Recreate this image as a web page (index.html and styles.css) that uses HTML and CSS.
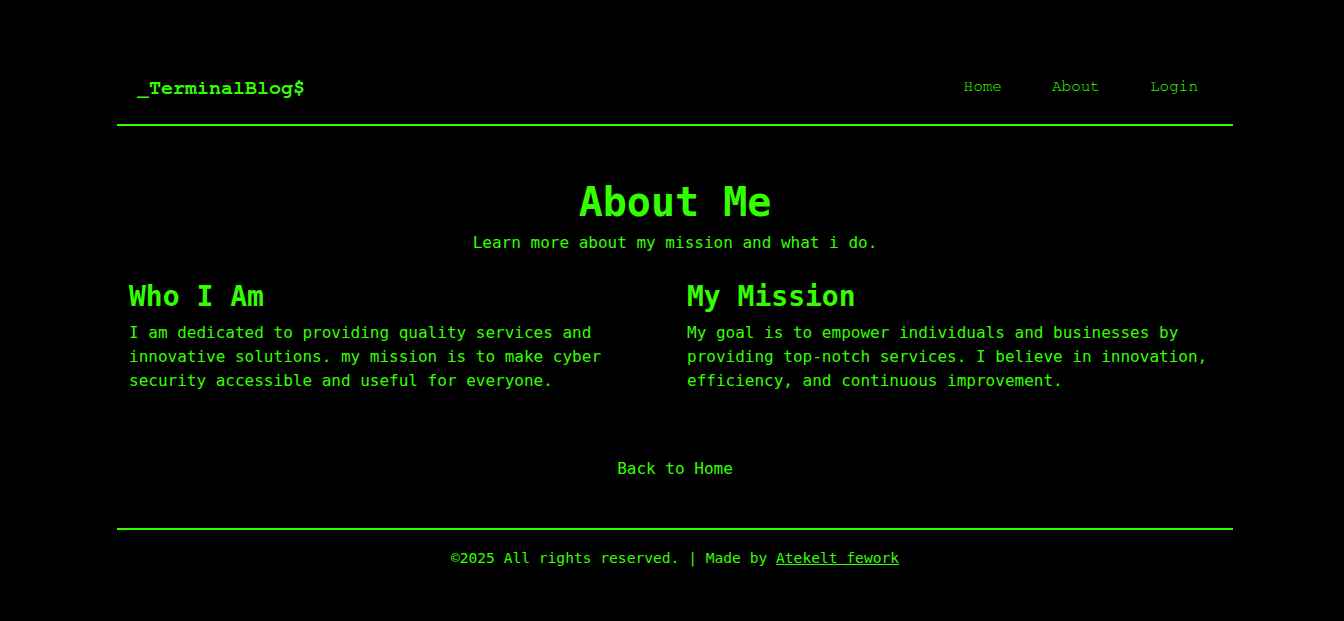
FILE: index.html
```html
<!DOCTYPE html>
<html lang="en">
<head>
<meta charset="utf-8">
<title>About - TerminalBlog</title>
<link rel="stylesheet" href="styles.css">
</head>
<body>
<div class="page">
  <header class="site-header">
    <a class="logo" href="#">_TerminalBlog$</a>
    <nav class="nav">
      <a href="#">Home</a>
      <a href="#">About</a>
      <a href="#">Login</a>
    </nav>
  </header>
  <main class="main">
    <section class="intro">
      <h1>About Me</h1>
      <p>Learn more about my mission and what i do.</p>
    </section>
    <section class="columns">
      <div class="col">
        <h2>Who I Am</h2>
        <p>I am dedicated to providing quality services and innovative solutions. my mission is to make cyber security accessible and useful for everyone.</p>
      </div>
      <div class="col">
        <h2>My Mission</h2>
        <p>My goal is to empower individuals and businesses by providing top-notch services. I believe in innovation, efficiency, and continuous improvement.</p>
      </div>
    </section>
    <div class="back"><a href="#">Back to Home</a></div>
  </main>
  <footer class="site-footer">
    <p>&copy;2025 All rights reserved. | Made by <a href="#">Atekelt fework</a></p>
  </footer>
</div>
</body>
</html>
```
FILE: styles.css
```css
html, body {
  margin: 0;
  background: #000;
}
body {
  padding: 50px 0 0 6px;
  color: #33ff00;
  font-family: "DejaVu Sans Mono", monospace;
}
a { color: #33ff00; text-decoration: none; }
.page {
  width: 1116px;
  margin: 0 auto;
}
.site-header {
  display: flex;
  align-items: center;
  justify-content: space-between;
  padding: 20px;
  border-bottom: 2px solid #33ff00;
}
.logo {
  font-family: "Nimbus Mono PS", "Nimbus Mono L", "FreeMono", "Courier 10 Pitch", "Courier", "Liberation Mono", monospace;
  font-weight: bold;
  font-size: 20px;
  line-height: 24px;
  padding-top: 2px;
}
.nav {
  display: flex;
  gap: 20px;
}
.nav a {
  font-family: "Nimbus Mono PS", "Nimbus Mono L", "FreeMono", "Courier 10 Pitch", "Courier", "Liberation Mono", monospace;
  font-size: 16px;
  line-height: 18px;
  padding: 7px 15px 9px;
}
.main {
  padding: 0 12px;
}
.intro {
  text-align: center;
  padding-top: 52px;
}
.intro h1 {
  margin: 0;
  font-size: 40px;
  line-height: 48px;
  font-weight: bold;
}
.intro p {
  margin: 5px 0 0;
  font-size: 16px;
  line-height: 24px;
}
.columns {
  display: grid;
  grid-template-columns: 1fr 1fr;
  gap: 24px;
  margin-top: 25px;
}
.col h2 {
  margin: 0;
  font-size: 28px;
  line-height: 33.6px;
  font-weight: bold;
}
.col p {
  margin: 7px 0 0;
  font-size: 16px;
  line-height: 24px;
}
.back {
  text-align: center;
  margin-top: 64px;
  padding-bottom: 47px;
  font-size: 16px;
  line-height: 24px;
}
.site-footer {
  border-top: 2px solid #33ff00;
  text-align: center;
  padding-top: 17px;
}
.site-footer p {
  margin: 0;
  font-size: 14.6px;
  line-height: 22px;
}
.site-footer a {
  text-decoration: underline;
}
```
